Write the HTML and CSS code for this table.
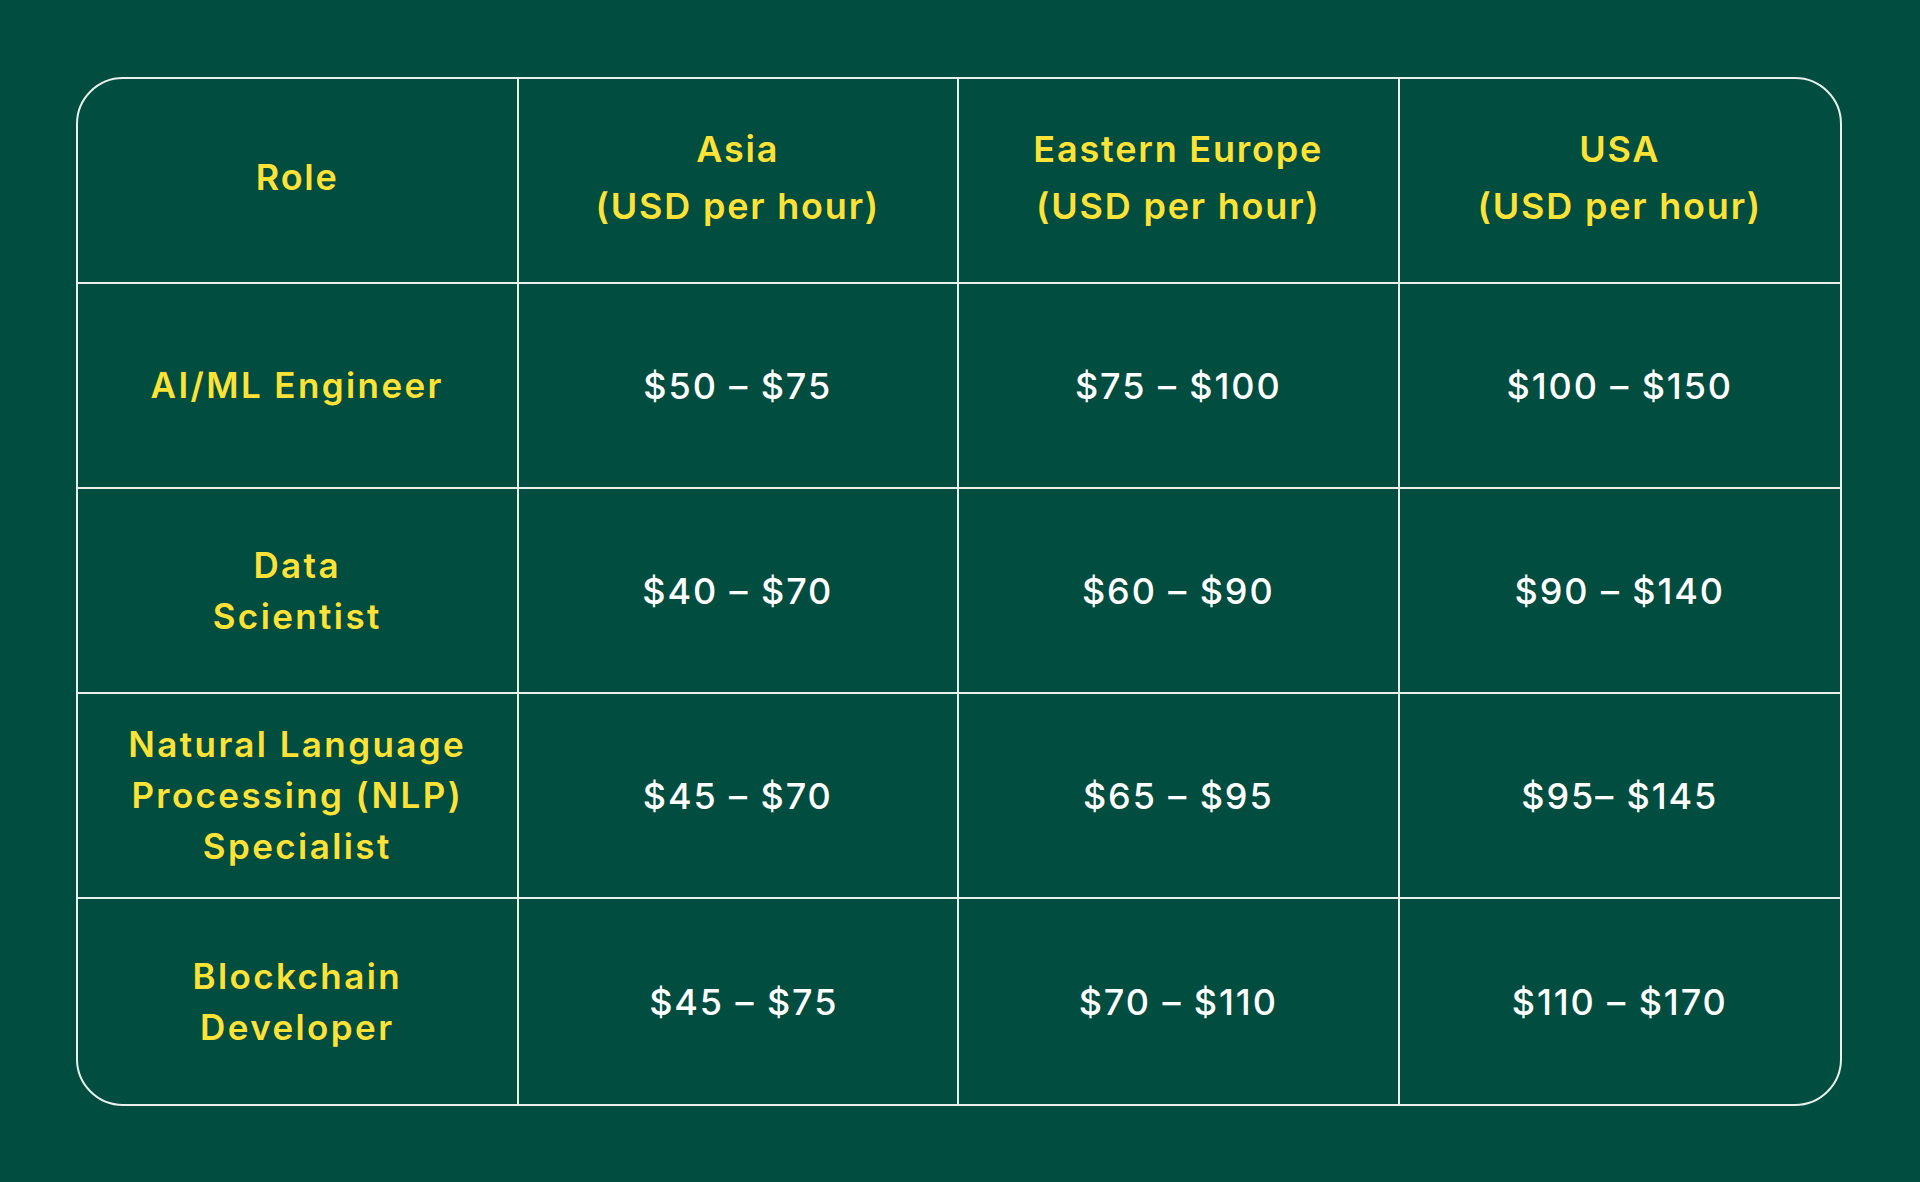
FILE: index.html
```html
<!DOCTYPE html>
<html lang="en">
<head>
<meta charset="utf-8">
<title>Hourly rates</title>
<link rel="stylesheet" href="styles.css">
</head>
<body>
<main class="page">
  <div class="rates">
    <div class="cell head">Role</div>
    <div class="cell head">Asia<br>(USD per hour)</div>
    <div class="cell head">Eastern Europe<br>(USD per hour)</div>
    <div class="cell head last">USA<br>(USD per hour)</div>

    <div class="cell role">AI/ML Engineer</div>
    <div class="cell price">$50 – $75</div>
    <div class="cell price">$75 – $100</div>
    <div class="cell price last">$100 – $150</div>

    <div class="cell role">Data<br>Scientist</div>
    <div class="cell price">$40 – $70</div>
    <div class="cell price">$60 – $90</div>
    <div class="cell price last">$90 – $140</div>

    <div class="cell role">Natural Language<br>Processing (NLP)<br>Specialist</div>
    <div class="cell price">$45 – $70</div>
    <div class="cell price">$65 – $95</div>
    <div class="cell price last">$95– $145</div>

    <div class="cell role bottom">Blockchain<br>Developer</div>
    <div class="cell price bottom shift">$45 – $75</div>
    <div class="cell price bottom">$70 – $110</div>
    <div class="cell price bottom last">$110 – $170</div>
  </div>
</main>
</body>
</html>
```
FILE: styles.css
```css
html, body {
  margin: 0;
  padding: 0;
  background: #014d40;
}

.page {
  width: 1920px;
  height: 1182px;
  box-sizing: border-box;
  padding: 77px 78px 0 76px;
}

.rates {
  width: 1766px;
  box-sizing: border-box;
  display: grid;
  grid-template-columns: repeat(4, 1fr);
  grid-auto-rows: 205px;
  border: 2px solid #e9f0ec;
  border-radius: 47px;
  overflow: hidden;
}

.cell {
  display: flex;
  align-items: center;
  justify-content: center;
  text-align: center;
  border-right: 2px solid #e9f0ec;
  border-bottom: 2px solid #e9f0ec;
  font-family: Inter, "Open Sans", sans-serif;
}

.cell.last {
  border-right: none;
}

.cell.bottom {
  border-bottom: none;
}

.head {
  color: #ffe236;
  font-weight: 600;
  font-size: 36px;
  line-height: 57px;
  letter-spacing: 1.8px;
  padding-bottom: 6px;
}

.role {
  color: #ffe236;
  font-weight: 600;
  font-size: 35px;
  line-height: 51px;
  letter-spacing: 2.4px;
}

.price {
  color: #ffffff;
  font-weight: 500;
  font-size: 36px;
  line-height: 50px;
  letter-spacing: 1.9px;
}

.price.shift {
  padding-left: 12px;
}
```
